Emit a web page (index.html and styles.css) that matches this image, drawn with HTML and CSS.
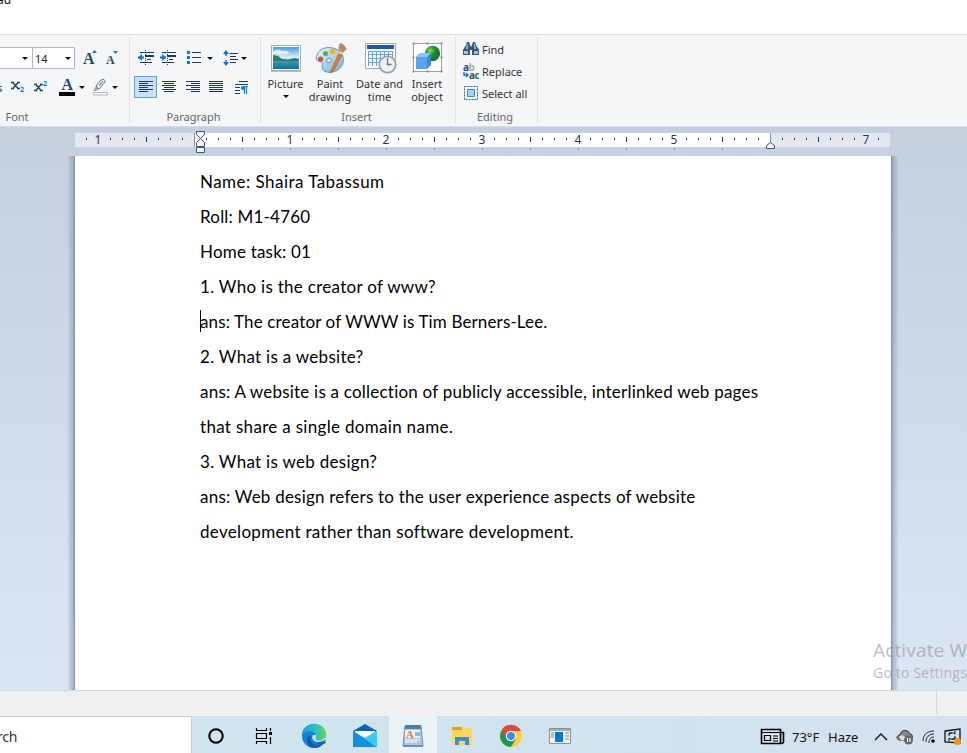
FILE: index.html
```html
<!DOCTYPE html>
<html lang="en">
<head>
<meta charset="utf-8">
<title>Home task - WordPad</title>
<link rel="stylesheet" href="styles.css">
</head>
<body>
<header class="titlebar"><span class="title">ad</span></header>
<nav class="ribbon">
  <section class="group font-group">
    <div class="row top-row">
      <div class="combo family"><i class="caret"></i></div>
      <div class="combo size"><span>14</span><i class="caret"></i></div>
      <svg class="grow" width="18" height="18" viewBox="0 0 18 18"><text x="1" y="15" class="serif" font-size="16">A</text><path d="M10 4h5l-2.500-3z" fill="#0b74d8"/></svg>
      <svg class="shrink" width="16" height="18" viewBox="0 0 16 18"><text x="1" y="15" class="serif" font-size="12">A</text><path d="M8 2h5l-2.500 3z" fill="#0b74d8"/></svg>
    </div>
    <div class="row second-row">
      <span class="cut-s">s</span>
      <svg class="sub" width="14" height="16" viewBox="0 0 14 16"><path d="M1.500 3l6 7M7.500 3l-6 7M0 3.500h3M6 3.500h3M0 9.500h3M6 9.500h3" stroke="#1f4469" stroke-width="1.500"/><text x="9" y="13" font-size="7" class="blue">2</text></svg>
      <svg class="sup" width="14" height="16" viewBox="0 0 14 16"><path d="M1.500 5l6 7M7.500 5l-6 7M0 5.500h3M6 5.500h3M0 11.500h3M6 11.500h3" stroke="#1f4469" stroke-width="1.500"/><text x="9" y="7" font-size="7" class="blue">2</text></svg>
      <svg class="color" width="16" height="18" viewBox="0 0 16 18"><text x="2.500" y="12" class="serif" font-size="16">A</text><path d="M0 14h16v4H0z" fill="#000"/></svg>
      <i class="caret"></i>
      <svg class="marker" width="18" height="18" viewBox="0 0 18 18"><path d="M1.500 14.500h14v2.500h-14z" fill="#fff" stroke="#a6b5d1"/><path d="M4 8l5-6q4-2 4 2l-6 7z" fill="#edf3fa" stroke="#657890"/><path d="M1 13l3-5 3 3-3 2z" fill="#c2a56f"/><path d="M4 8l3 3M7 8l4-5" stroke="#526b89"/></svg>
      <i class="caret"></i>
    </div>
    <div class="label">Font</div>
  </section>
  <section class="group para-group">
    <div class="row top-row">
      <svg width="18" height="16" viewBox="0 0 18 16"><path d="M8.500 0v16" stroke="#1e395b" stroke-dasharray="1 1"/><path d="M3 2.500h14M3 12.500h12M10 9.500h4" stroke="#1e395b"/><path d="M8 6h9" stroke="#1e395b" stroke-width="2"/><path d="M1 7.500h6" stroke="#0873dc" stroke-width="2"/><path d="M5 4L1 7.500 5 11z" fill="#0873dc"/></svg>
      <svg class="indent" width="18" height="16" viewBox="0 0 18 16"><path d="M8.500 0v16" stroke="#1e395b" stroke-dasharray="1 1"/><path d="M3 2.500h14M3 12.500h12M10 9.500h4" stroke="#1e395b"/><path d="M8 6h9" stroke="#1e395b" stroke-width="2"/><path d="M1 7.500h6" stroke="#0873dc" stroke-width="2"/><path d="M3 4l4 3.500L3 11z" fill="#0873dc"/></svg>
      <svg class="bullets" width="15" height="16" viewBox="0 0 15 16"><path d="M0 1h3v3H0zM0 6h3v3H0zM0 11h3v3H0z" fill="#0873dc"/><path d="M5 2.500h9M5 7.500h9M5 12.500h9" stroke="#1e395b"/></svg>
      <i class="caret"></i>
      <svg class="spacing" width="16" height="18" viewBox="0 0 16 18"><path d="M3 2v5M3 11v5" stroke="#0873dc" stroke-width="1.500"/><path d="M0 5l3-4 3 4zM0 13l3 4 3-4z" fill="#0873dc"/><path d="M7 4.500h8M7 7.500h6M7 10.500h8M7 13.500h6" stroke="#1e395b"/></svg>
      <i class="caret tight"></i>
    </div>
    <div class="row second-row">
      <span class="selected"><svg width="15" height="13" viewBox="0 0 15 13"><path d="M0 .5h14M0 2.500h9M0 4.500h14M0 6.500h9M0 8.500h14M0 10.500h9" class="lines"/></svg></span>
      <svg class="align" width="15" height="13" viewBox="0 0 15 13"><path d="M0 .5h14M2 2.500h10M0 4.500h14M2 6.500h10M0 8.500h14M2 10.500h10" class="lines"/></svg>
      <svg class="align" width="15" height="13" viewBox="0 0 15 13"><path d="M0 .5h14M5 2.500h9M0 4.500h14M5 6.500h9M0 8.500h14M5 10.500h9" class="lines"/></svg>
      <svg class="align justify" width="15" height="13" viewBox="0 0 15 13"><path d="M0 .5h14M0 2.500h14M0 4.500h14M0 6.500h14M0 8.500h14M0 10.500h14" class="lines"/></svg>
      <svg class="pilcrow" width="14" height="15" viewBox="0 0 14 15"><path d="M4 1.500h9M0 4.500h13M0 7.500h5M0 10.500h5M0 13.500h5" stroke="#1e395b"/><path d="M9 6v4Q6 10 6 8t3-2z" fill="#0b82ea"/><path d="M13 6.500H8.500M9.500 6v8M11.500 6v8" fill="none" stroke="#0b82ea" stroke-width="1.200"/></svg>
    </div>
    <div class="label">Paragraph</div>
  </section>
  <section class="group insert-group">
    <div class="big-buttons">
      <div class="big picture"><svg width="34" height="34" viewBox="0 0 34 34"><defs><linearGradient id="sky" x2="0" y2="1"><stop stop-color="#4b9cdf"/><stop offset=".5" stop-color="#e0f3fa"/><stop offset=".6" stop-color="#419db4"/><stop offset="1" stop-color="#0b719c"/></linearGradient></defs><path d="M2.500 5.500h29v25h-29z" fill="#fff" stroke="#a4abb2"/><path d="M4 7h26v22H4z" fill="url(#sky)"/><path d="M4 15l5 1 4 3 6 1 6-2 5 1v2H4z" fill="#32796b"/><path d="M4 12q4-4 9-1 4-1 8 2-6 2-17 1z" fill="#fff" opacity=".75"/><path d="M2 31.500h30" stroke="#b8bdc2"/></svg><span>Picture</span><i class="caret"></i></div>
      <div class="big paint"><svg width="34" height="34" viewBox="0 0 34 34"><defs><linearGradient id="palette" x2="1" y2="1"><stop stop-color="#eef7fc"/><stop offset="1" stop-color="#6aafdc"/></linearGradient></defs><path d="M4 15C6 8 16 5 25 10c8 5 7 17-2 21-7 3-14 1-14-4 0-3 2-4-1-5-4-1-6-2-4-7z" fill="url(#palette)" stroke="#6798bb"/><circle cx="7.500" cy="19" r="2.600" fill="#d64d3b"/><circle cx="12.500" cy="13.500" r="2.600" fill="#54b749"/><circle cx="19.500" cy="11.500" r="2.800" fill="#f3b51d"/><circle cx="16" cy="20.500" r="2.300" fill="#eef6fc" stroke="#5794be"/><path d="M17 33l9-20 3 2-8 15z" fill="#e77a20" stroke="#b86428" stroke-width=".7"/><path d="M26 12q-1-6 1-9l3 1 4 5q-3 2-5 5z" fill="#b78a64"/><path d="M26 12l4 2" stroke="#e4d4c2" stroke-width="2"/></svg><span>Paint<br>drawing</span></div>
      <div class="big date"><svg width="34" height="34" viewBox="0 0 34 34"><path d="M2.500 3.500h30v25h-30z" fill="#fafcff" stroke="#a4a9ad"/><path d="M4 5h27v4H4z" fill="#2657a0"/><path d="M5 11h25v15H5z" fill="#6ba5df"/><path d="M6 12h3v2H6zM10 12h3v2h-3zM14 12h3v2h-3zM18 12h3v2h-3zM22 12h3v2h-3zM26 12h3v2h-3zM6 15h3v3H6zM10 15h3v3h-3zM14 15h3v3h-3zM18 15h3v3h-3zM22 15h3v3h-3zM26 15h3v3h-3zM6 19h3v3H6zM10 19h3v3h-3zM14 19h3v3h-3zM6 23h3v3H6zM10 23h3v3h-3zM14 23h3v3h-3z" fill="#eff8ff"/><circle cx="24.500" cy="24.500" r="8.200" fill="#eef1f3" stroke="#989fa6" stroke-width="1.700"/><path d="M24.500 18v6.500h4" fill="none" stroke="#657079" stroke-width="1.300"/></svg><span>Date and<br>time</span></div>
      <div class="big object"><svg width="34" height="34" viewBox="0 0 34 34"><path d="M3.500 3.500h28v28h-28z" fill="#fff" stroke="#9aa0a5"/><path d="M2.500 2.500h2v2h-2zM16.500 2.500h2v2h-2zM30.500 2.500h2v2h-2zM2.500 16.500h2v2h-2zM30.500 16.500h2v2h-2zM2.500 30.500h2v2h-2zM16.500 30.500h2v2h-2zM30.500 30.500h2v2h-2z" fill="#85898d"/><defs><radialGradient id="ball" cx=".35" cy=".3"><stop stop-color="#86d96d"/><stop offset=".6" stop-color="#27932e"/><stop offset="1" stop-color="#187b25"/></radialGradient></defs><circle cx="22.500" cy="13.500" r="7.700" fill="url(#ball)"/><path d="M6 17l4-4h11v12l-4 4H6z" fill="#3d87df"/><path d="M6 17l4-4h11l-4 4H6z" fill="#88c5ff"/><path d="M6 17h11v12H6z" fill="#5aa3ef"/></svg><span>Insert<br>object</span></div>
    </div>
    <div class="label">Insert</div>
  </section>
  <section class="group edit-group">
    <div class="edit-item"><svg width="16" height="16" viewBox="0 0 16 16"><path d="M3 4l1-3h2l1 3 1 2 1-2 1-3h2l1 3 3 5v5H9V9H7v5H0V9z" fill="#34577d"/><path d="M1 10h4v3H1zM11 10h4v3h-4z" fill="#a9c0d6"/><path d="M4 3h1v5H3zM11 3h1l1 5h-2z" fill="#9bb4cd"/></svg><span>Find</span></div>
    <div class="edit-item"><svg width="16" height="17" viewBox="0 0 16 17"><text x="0" y="8" class="letters" fill="#27486c">a</text><text x="5.500" y="8" class="letters" fill="#aaa">b</text><text x="6" y="15.500" class="letters" fill="#27486c">a</text><text x="11.500" y="15.500" class="letters" fill="#22852d">c</text><path d="M1 9v3h4M3 10l2 2-2 2" fill="none" stroke="#0873dc" stroke-width="1.400"/></svg><span>Replace</span></div>
    <div class="edit-item"><svg width="16" height="16" viewBox="0 0 16 16"><path d="M1.500 1.500h13v13h-13z" fill="#fff" stroke="#315f91" stroke-dasharray="2 1"/><path d="M4.500 4.500h7v7h-7z" fill="#a7d2fb" stroke="#3685d5"/></svg><span>Select all</span></div>
    <div class="label">Editing</div>
  </section>
</nav>
<main class="workspace">
  <svg class="ruler" width="967" height="29" viewBox="0 0 967 29">
    <defs>
      <pattern id="ticks" x="194" width="96" height="29" patternUnits="userSpaceOnUse"><path d="M12 11h1v2h-1zM24 11h1v2h-1zM36 11h1v2h-1zM48 10h1v5h-1zM60 11h1v2h-1zM72 11h1v2h-1zM84 11h1v2h-1z" fill="#1e395b"/></pattern>
      <pattern id="tabs" x="194" width="48" height="29" patternUnits="userSpaceOnUse"><path d="M0 21h1v2H0z" fill="#8592a8"/></pattern>
    </defs>
    <path d="M75 6h815v14H75z" fill="#e4e8f0"/><path d="M195 6h576v14H195z" fill="#fff"/>
    <path d="M194 6h1v14h-1zM770 6h1v14h-1z" fill="#8592a8"/>
    <path d="M80 0h112v29H80zM198 0h570v29H198zM773 0h110v29H773z" fill="url(#ticks)"/><path d="M235 18h500v11H235z" fill="url(#tabs)"/>
    <g class="ruler-numbers"><text x="98" y="17">1</text><text x="290" y="17">1</text><text x="386" y="17">2</text><text x="482" y="17">3</text><text x="578" y="17">4</text><text x="674" y="17">5</text><text x="866" y="17">7</text></g>
    <g fill="#f3f5f8" stroke="#3f5878"><path d="M196.500 4.500h8v3l-4 4-4-4zM200.500 11.500l4 4v4h-8v-4zM196.500 20.500h8v5h-8zM770.500 15.500l4 3v3h-8v-3z"/></g>
  </svg>
  <div class="page-row">
    <article class="page">
      <p class="name">Name: Shaira Tabassum</p><p class="short">Roll: M1-4760</p><p class="short">Home task: 01</p><p class="question">1. Who is the creator of www?</p>
      <p class="cursor-line">ans: The creator of WWW is Tim Berners-Lee.</p><p class="question">2. What is a website?</p>
      <p class="answer">ans: A website is a collection of publicly accessible, interlinked web pages<br><span class="last-line">that share a single domain name.</span></p>
      <p class="question">3. What is web design?</p><p class="answer">ans: Web design refers to the user experience aspects of website<br><span class="last-line">development rather than software development.</span></p>
    </article>
  </div>
</main>
<footer class="status"></footer>
<div class="taskbar">
  <div class="search">rch</div>
  <div class="apps">
    <span><svg width="18" height="18" viewBox="0 0 18 18"><circle cx="9" cy="9" r="6.700" fill="none" stroke="#000" stroke-width="2"/></svg></span>
    <span><svg width="18" height="18" viewBox="0 0 18 18"><path d="M1.500 1v2.500h10V1M1.500 17v-2.500h10V17M1.500 6.500h10v5h-10zM15.500 1v3M15.500 10v7" fill="none" stroke="#000" stroke-width="1.200"/><path d="M14 5h3v3h-3z"/></svg></span>
    <span><svg width="26" height="26" viewBox="0 0 26 26"><defs><linearGradient id="edge-a"><stop stop-color="#1c9de1"/><stop offset=".55" stop-color="#28bfc9"/><stop offset="1" stop-color="#72d63f"/></linearGradient></defs><circle cx="13" cy="13" r="12" fill="#1383d9"/><path d="M1 12C2-3 25-3 25 12c0 5-5 7-9 5-3-1 0-3-1-5C13 7 5 7 1 12z" fill="url(#edge-a)"/><path d="M10 12c-3 7 4 13 13 8-5 7-14 6-16 1-2-5-1-8 3-9z" fill="#105aa9"/><path d="M12 11c-3 3-1 8 4 9 4 0 7-1 9-3v3c-5 2-12 1-14-4q-1-3 1-5z" fill="#105aa9"/><path d="M12 12c-2 3 0 6 4 7 4 0 7-1 9-3l-1 3 2 1v-6l-2 1c-3 3-6 3-8 2-3-1 0-3-1-5z" fill="#d1e6ed"/></svg></span>
    <span><svg width="26" height="26" viewBox="0 0 26 26"><path d="M1 8l12-7 12 7v5H1z" fill="#0964b2"/><path d="M3 8h20v8H3z" fill="#fff"/><path d="M1 8l12 7 12-7v16H1z" fill="#30bff0"/><path d="M1 8l23 16H1z" fill="#168ed9"/><path d="M13 15l12-7v16z" fill="#39caf4"/></svg></span>
    <span class="active"><svg width="24" height="26" viewBox="0 0 24 26"><path d="M4 3h16l2 20H2z" fill="#a9c6df" stroke="#6f8fac"/><path d="M4 2h16v4H4z" fill="#4e7fa8"/><path d="M4 7h15v8H4z" fill="#e8f2fb"/><text x="5" y="15" class="wordpad-a">A</text><path d="M14 10h5M14 12h5" stroke="#477cbd"/><path d="M4 17h15M4 19h12" stroke="#fff"/><path d="M2 22h20v2H2z" fill="#7193b1"/></svg></span>
    <span><svg width="24" height="24" viewBox="0 0 24 24"><path d="M2 3h10v4H2z" fill="#e2a112"/><path d="M2 6l10 0 2-2h8v17H2z" fill="#ffd560"/><path d="M5 13h14v8h-4v-4H9v4H5z" fill="#368fd5"/></svg></span>
    <span><svg width="24" height="24" viewBox="0 0 24 24"><circle cx="12" cy="12" r="11" fill="#ffcd40"/><path d="M12 12L2.500 6.500A11 11 0 0 0 12 23l5-8z" fill="#179b57"/><path d="M2.500 6.500A11 11 0 0 1 22 7H12l-4 8z" fill="#db4b3e"/><circle cx="12" cy="12" r="5.200" fill="#fff"/><circle cx="12" cy="12" r="4" fill="#4688f1"/></svg></span>
    <span><svg width="24" height="20" viewBox="0 0 24 20"><path d="M1.500 2.500h21v15h-21z" fill="#f3f3f3" stroke="#8a9298"/><path d="M2 3h20v2H2z" fill="#a4adb4"/><path d="M7 6h8v10H7z" fill="#0679d8"/><path d="M3 7h3M3 9h3M3 11h3M17 7h4M17 10h4M17 13h4" stroke="#888"/></svg></span>
  </div>
  <div class="tray">
    <svg class="news" width="25" height="17" viewBox="0 0 25 17"><path d="M1.500 1.500h19v14h-19zM20.500 4.500h3v9q0 2-2 2h-2" fill="none" stroke="#000" stroke-width="1.600"/><path d="M1 4.500h19M13 8h5M13 10.500h5M13 13h5M4.500 7.500h6v5h-6z" fill="none" stroke="#000" stroke-width="1.200"/></svg>
    <span class="temperature">73°F</span><span class="haze">Haze</span>
    <svg class="chevron" width="14" height="10" viewBox="0 0 14 10"><path d="M1 8l6-6 6 6" fill="none" stroke="#111" stroke-width="1.300"/></svg>
    <svg class="cloud" width="18" height="16" viewBox="0 0 18 16"><path d="M4 11C0 11 0 6 4 6 5 0 12 0 14 5c3 0 3 4 1 6H5z" fill="#858585" stroke="#333"/><path d="M4 10q-2-3 2-4l7 5H5z" fill="#ddd"/><circle cx="12.500" cy="11" r="4.500" fill="#666"/><path d="M11.500 9v4M14 9v4" stroke="#fff" stroke-width="1.200"/></svg>
    <svg class="wifi" width="15" height="15" viewBox="0 0 15 15"><path d="M1 12C1 5 6 2 12 2M4 13C4 8 7 5 12 5M7 14c0-4 2-6 5-6" fill="none" stroke="#222"/><circle cx="11" cy="12" r="1.800"/></svg>
    <svg class="update" width="18" height="18" viewBox="0 0 18 18"><path d="M1 3l15-2v14L1 14z" fill="none" stroke="#111" stroke-width="1.300"/><path d="M5 7q2-4 6-1V3M11 9q-2 4-6 1v3M5 8V5h3M11 8v3H8" fill="none" stroke="#111"/><circle cx="13.500" cy="13.500" r="3.500" fill="#f7930b"/></svg>
  </div>
</div>
<aside class="activation"><div>Activate Windows</div><span>Go to Settings to activate Windows.</span></aside>
</body>
</html>
```
FILE: styles.css
```css
*{box-sizing:border-box}
body{margin:0;width:967px;height:753px;overflow:hidden;position:relative;background:#fff;font-family:"Noto Sans","Open Sans",sans-serif;font-size:11px;color:#333}
svg{display:block;flex:none}
.titlebar{height:34px;overflow:hidden}
.title{display:block;font-size:12px;line-height:16px;margin:-8px 0 0 -3px;color:#111}
.ribbon{display:flex;height:93px;background:#f5f6f7;border-top:1px solid #dadbdc;border-bottom:1px solid #dadbdc;padding-top:2px}
.group{position:relative;height:86px;border-right:1px solid #e0e2e4;display:flex;flex-direction:column;flex:none}
.font-group{width:130px}.para-group{width:131px}.insert-group{width:195px}.edit-group{width:82px}
.row{display:flex;align-items:center}
.top-row{height:42px}
.second-row{height:16px}
.label{margin-top:auto;height:13px;line-height:13px;text-align:center;color:#666}
.font-group .label{padding-right:95px}
.para-group .label{padding-right:3px}
.insert-group .label,.edit-group .label{padding-right:3px}
.caret{display:block;border:3px solid transparent;border-top-color:#111;border-bottom:0;width:6px;height:3px;flex:none}
.combo{height:22px;border:1px solid #abbad4;background:#fff;display:flex;align-items:center;justify-content:space-between;color:#222}
.family{width:33px;border-left:0;justify-content:flex-end;padding-right:4px}
.size{width:42px;padding:0 3px 0 2px;border-left-width:0}
.grow{margin-left:7px}.shrink{margin-left:5px}
.serif{font-family:"Liberation Serif",serif;font-weight:700;fill:#27486c}
.blue{font-family:"Open Sans",sans-serif;font-weight:700;fill:#0879dd}
.letters{font:700 10px "Open Sans",sans-serif}
.cut-s{width:11px;margin-left:-3px;margin-right:3px;color:#333}
.sup{margin-left:9px}.color{margin-left:11px}.color+.caret{margin-left:4px}.marker{margin-left:7px;margin-right:2px}
.para-group .top-row{padding-left:7px}.indent{margin-left:4px}.bullets{margin-left:10px}.bullets+.caret{margin-left:5px}.spacing{margin-left:10px}.tight{margin-left:2px}
.selected{width:23px;height:22px;margin:0 0 0 4px;padding:4px;border:1px solid #62a2e4;background:#c9e0f7}
.lines{stroke:#1e395b;fill:none}
.align{margin-left:5px}.align+.align{margin-left:9px}.align+.justify{margin-left:8px}.pilcrow{margin-left:11px}
.big-buttons{display:grid;grid-template-columns:49px 40px 59px 36px}
.big{display:flex;flex-direction:column;align-items:center;text-align:center;line-height:13px;white-space:nowrap;padding-top:3px}
.big span{margin-top:3px}.big .caret{margin-top:5px}
.edit-item{height:22px;display:flex;align-items:center;gap:3px;padding:2px 0 0 7px}
.ruler-numbers{font-family:"Noto Sans",sans-serif;font-size:12px;fill:#1e395b;text-anchor:middle}
.workspace{height:563px;background:linear-gradient(#c5cfdf,#dce6f3)}
.page-row{height:534px;display:flex}
.page-row::before,.page-row::after{content:"";width:8px;background:linear-gradient(90deg,#8090aa00,#8090aaa0 87%,#8491a7 88%)}
.page-row::before{margin-left:67px}
.page-row::after{transform:scaleX(-1)}
.page{width:816px;background:#fff;padding:8px 100px 0 125px;font:17px/35px Lato,sans-serif;color:#000;letter-spacing:.14px;white-space:nowrap}
.page p{margin:0}
.page .name{letter-spacing:.46px}.page .short{letter-spacing:.2px}.page .question{letter-spacing:.29px}.page .answer{letter-spacing:.22px}.last-line{letter-spacing:.31px}
.cursor-line{position:relative}
.cursor-line::before{content:"";position:absolute;left:0;top:6px;width:1px;height:22px;background:#000}
.status{height:26px;background:#f0f0f0;border-top:1px solid #d5d5d5;display:flex;padding:1px 30px 2px;justify-content:flex-end}
.status::before{content:"";width:1px;background:#d5d5d5}
.taskbar{height:37px;background:linear-gradient(90deg,#cfe6ef,#d1e3ec 60%,#d6e1f0);display:flex;overflow:hidden}
.search{width:192px;background:#fff;border:1px solid #ccc;border-left:0;border-bottom:0;font-size:14px;letter-spacing:-.2px;line-height:39px;color:#333;text-indent:-3px}
.apps{display:grid;grid-template-columns:48px 48px 52px 49px 48px 49px 49px 49px}
.apps span{display:grid;place-items:center;height:37px;padding-top:2px}
.apps .active{background:#eaf3f8}
.wordpad-a{font:700 11px "Liberation Serif",serif;fill:#ee7d22}
.tray{display:flex;align-items:center;margin-left:176px;font-size:13px;color:#111;padding-top:4px}
.temperature{margin-left:7px;width:36px}.haze{width:46px}.cloud{margin-left:8px}.wifi{margin-left:8px}.update{margin-left:7px}
.activation{position:absolute;left:873px;top:638px;width:94px;overflow:hidden;color:rgba(150,150,150,.65);font-family:"Open Sans",sans-serif;white-space:nowrap}
.activation div{font-size:19px;line-height:24px;letter-spacing:.15px}.activation span{display:block;font-size:14px;line-height:21px;letter-spacing:.2px}
```
